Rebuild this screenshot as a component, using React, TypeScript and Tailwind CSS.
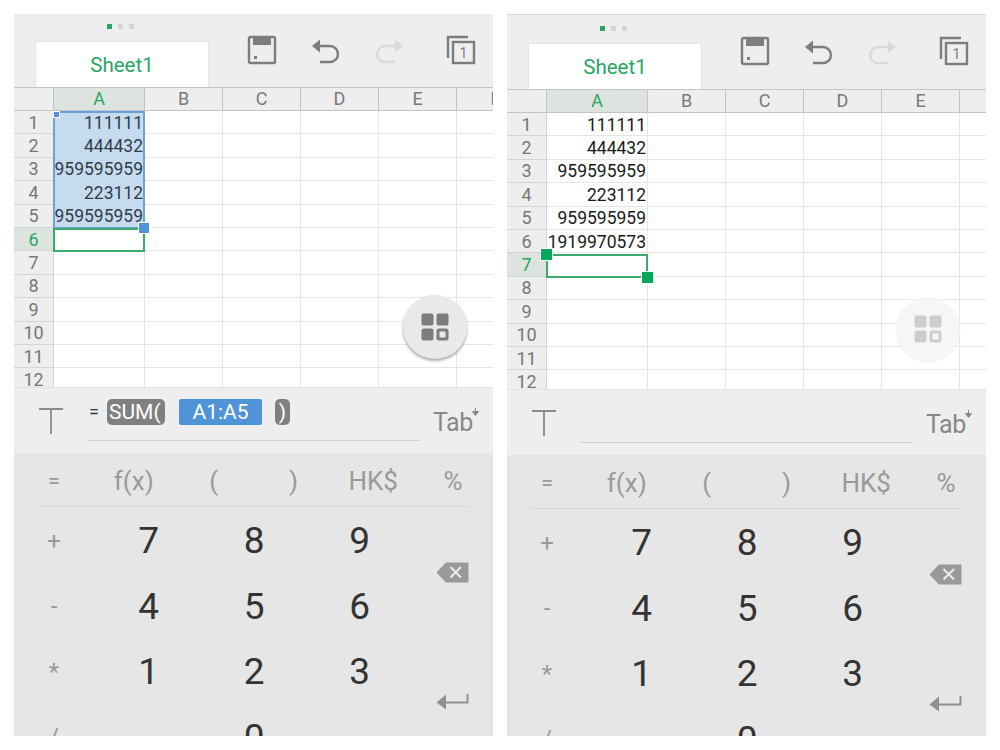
import React from "react";

const rows = ["1", "2", "3", "4", "5", "6", "7", "8", "9", "10", "11", "12"];
const colsOther = ["B", "C", "D", "E", "F"];

function Save() {
  return (
    <svg width="30" height="30" viewBox="0 0 30 30" className="block">
      <rect x="2" y="2" width="26" height="26" rx="1.5" fill="none" stroke="#7d7d7d" strokeWidth="2.4" />
      <rect x="6" y="2" width="18" height="8" fill="#7d7d7d" />
      <rect x="7" y="21" width="3" height="3" fill="#7d7d7d" />
    </svg>
  );
}

function Undo({ color, flip }: { color: string; flip?: boolean }) {
  return (
    <svg width="30" height="28" viewBox="0 0 30 28" className="block" style={flip ? { transform: "scaleX(-1)" } : undefined}>
      <path d="M7 8 H19 a8 8 0 0 1 0 16 H9" fill="none" stroke={color} strokeWidth="2.4" />
      <path d="M9 1.5 V14.5 L1 8 Z" fill={color} />
    </svg>
  );
}

function Sheets() {
  return (
    <svg width="30" height="30" viewBox="0 0 30 30" className="block">
      <path d="M2 23 V2 H22" fill="none" stroke="#7d7d7d" strokeWidth="2.4" />
      <rect x="7" y="7" width="21" height="21" fill="none" stroke="#7d7d7d" strokeWidth="2.4" />
      <text x="17.5" y="23" textAnchor="middle" fontSize="14" fill="#7d7d7d" fontFamily="Roboto, sans-serif">1</text>
    </svg>
  );
}

function TIcon() {
  return (
    <svg width="26" height="28" viewBox="0 0 26 28" className="block">
      <path d="M1 2 H25 M13 2 V27" stroke="#8a8a8a" strokeWidth="1.8" fill="none" />
    </svg>
  );
}

function Backspace() {
  return (
    <svg width="33" height="21" viewBox="0 0 33 21" className="block">
      <path d="M10 0.5 H32.5 V20.5 H10 L0.5 10.5 Z" fill="#999999" />
      <path d="M14.5 5 L25 15.5 M25 5 L14.5 15.5" stroke="#ececec" strokeWidth="2" />
    </svg>
  );
}

function Enter() {
  return (
    <svg width="33" height="17" viewBox="0 0 33 17" className="block">
      <path d="M9 9.5 H31.5 V1" fill="none" stroke="#8f8f8f" strokeWidth="2" />
      <path d="M10 1.5 V16.5 L0.5 9.5 Z" fill="#8f8f8f" />
    </svg>
  );
}

function GridIcon({ color, hole }: { color: string; hole: string }) {
  return (
    <svg width="28" height="28" viewBox="0 0 28 28" className="block">
      <rect x="0.5" y="0.5" width="12" height="12" rx="2" fill={color} />
      <rect x="15.5" y="0.5" width="12" height="12" rx="2" fill={color} />
      <rect x="0.5" y="15.5" width="12" height="12" rx="2" fill={color} />
      <rect x="17" y="17" width="9" height="9" rx="1" fill={hole} stroke={color} strokeWidth="3" />
    </svg>
  );
}

function Panel({ second }: { second?: boolean }) {
  const values = second
    ? ["111111", "444432", "959595959", "223112", "959595959", "1919970573"]
    : ["111111", "444432", "959595959", "223112", "959595959", ""];
  const activeRow = second ? 6 : 5;
  const aWidth = second ? "w-[101px]" : "w-[91px]";

  return (
    <div className="relative w-[479px] h-[722px] overflow-hidden bg-[#eeeeee] flex flex-col" style={{ fontFamily: "Roboto, sans-serif" }}>
      {/* toolbar */}
      <div className={`${second ? "h-[75px] border-t border-[#dcdcdc]" : "h-[73px]"} flex shrink-0 bg-[#eeeeee]`}>
        <div className="w-[195px] shrink-0 flex flex-col items-center justify-end pl-[21px]">
          <div className="flex gap-[6px] mb-[12px] mr-[3px]">
            <span className="w-[5px] h-[5px] bg-[#29a664]" />
            <span className="w-[5px] h-[5px] bg-[#d4d4d4]" />
            <span className="w-[5px] h-[5px] bg-[#d4d4d4]" />
          </div>
          <div className="w-[174px] h-[46px] bg-white flex items-center justify-center pt-[1px] text-[20.5px] text-[#29a664] border-t border-x border-[#e6e6e6]">
            Sheet1
          </div>
        </div>
        <div className="flex items-start pl-[38px] pt-[21px]">
          <Save />
          <div className="ml-[34px] mt-[3px]"><Undo color="#7d7d7d" /></div>
          <div className="ml-[33px] mt-[3px]"><Undo color="#dadada" flip /></div>
          <div className="ml-[42px]"><Sheets /></div>
        </div>
      </div>

      {/* column header */}
      <div className="h-[24px] flex shrink-0 bg-[#eeeeee] border-y border-[#c4c4c4] text-[18px] text-[#7a7a7a] leading-[22px]">
        <div className="w-[40px] shrink-0 border-r border-[#c4c4c4]" />
        <div className={`${aWidth} shrink-0 bg-[#dde3de] text-center text-[#29a664] border-r border-[#c4c4c4]`}>A</div>
        {colsOther.map((c) => (
          <div key={c} className="w-[78px] shrink-0 text-center border-r border-[#c4c4c4]">{c}</div>
        ))}
      </div>

      {/* sheet body */}
      <div className="relative h-[276px] shrink-0 bg-white overflow-hidden">
        {rows.map((r, i) => (
          <div key={r} className="h-[23.4px] flex">
            <div
              className={`w-[40px] shrink-0 flex items-center justify-center text-[18px] border-r border-b border-[#d4d4d4] ${
                i === activeRow ? "bg-[#dde3de] text-[#29a664]" : "bg-[#eeeeee] text-[#777777]"
              }`}
            >
              {r}
            </div>
            <div
              className={`${aWidth} shrink-0 flex items-center justify-end pr-[1px] pt-[1px] text-[17.5px] border-r border-b ${
                !second && i < 5 ? "bg-[#c6dcee] border-[#c6dcee] text-[#2f3d4a]" : "border-[#e6e6e6] text-[#1a1a1a]"
              }`}
            >
              {values[i]}
            </div>
            {colsOther.map((c) => (
              <div key={c} className="w-[78px] shrink-0 border-r border-b border-[#e6e6e6]" />
            ))}
          </div>
        ))}

        {/* selection overlays */}
        {!second && (
          <>
            <div className="absolute left-[39px] top-0 w-[92px] h-[117.5px] border-2 border-[#6aa3d8]" />
            <div className="absolute left-[39px] top-0 w-[7px] h-[7px] bg-[#4f94d8] border border-white" />
            <div className="absolute left-[39px] top-[117px] w-[92px] h-[24px] border-2 border-[#3aab6d]" />
            <div className="absolute left-[124px] top-[111px] w-[12px] h-[12px] bg-[#4f94d8] border border-white" />
          </>
        )}
        {second && (
          <>
            <div className="absolute left-[39px] top-[141px] w-[102px] h-[24px] border-2 border-[#3aab6d]" />
            <div className="absolute left-[33px] top-[135px] w-[13px] h-[13px] bg-[#03a85a] border border-white" />
            <div className="absolute left-[134px] top-[158px] w-[13px] h-[13px] bg-[#03a85a] border border-white" />
          </>
        )}

        {/* floating button */}
        <div
          className={`absolute left-[389px] top-[184px] w-[64px] h-[64px] rounded-full flex items-center justify-center ${
            second ? "bg-[#f6f6f6] shadow-[0_1px_2px_rgba(0,0,0,0.06)]" : "bg-[#e9e9e9] shadow-[0_2px_3px_rgba(0,0,0,0.35)]"
          }`}
        >
          {second ? <GridIcon color="#cdcdcd" hole="#f6f6f6" /> : <GridIcon color="#7d7d7d" hole="#e9e9e9" />}
        </div>
      </div>

      {/* formula bar */}
      <div className="h-[66px] shrink-0 bg-[#eeeeee] border-t border-[#e2e2e2] flex">
        <div className="pl-[24px] pt-[19px] w-[74px] shrink-0"><TIcon /></div>
        <div className="w-[331px] h-[53px] shrink-0 border-b border-[#cdcdcd] flex items-start pt-[11px] text-[21px] leading-[26px]">
          {!second && (
            <>
              <span className="ml-[1px] w-[18px] text-[#333333] text-[18px]">=</span>
              <span className="w-[58px] h-[26px] bg-[#808080] rounded-[5px] text-white pl-[2px] overflow-hidden">SUM(</span>
              <span className="ml-[14px] w-[83px] h-[26px] bg-[#4f94d8] rounded-[2px] text-white text-center">A1:A5</span>
              <span className="ml-[13px] w-[15px] h-[26px] bg-[#808080] rounded-[5px] text-white text-center">)</span>
            </>
          )}
        </div>
        <div className="relative ml-[14px] pt-[20px] text-[25px] leading-[30px] text-[#888888] tracking-[-0.5px]">
          Tab
          <svg width="7" height="8" viewBox="0 0 7 8" className="absolute -right-[6px] top-[20px]">
            <path d="M3.5 0 V4 M0.5 3.5 H6.5 L3.5 7.5 Z" stroke="#888888" strokeWidth="1" fill="#888888" />
          </svg>
        </div>
      </div>

      {/* keypad */}
      <div className="flex-1 min-h-0 bg-[#e6e6e6] text-[#8c8c8c]">
        <div className="mx-[24px] h-[54px] border-b border-[#d6d6d6]">
          <div className="-mx-[24px] grid grid-cols-6 text-[26px] h-[53px] pt-[9px] leading-[38px] text-center text-[#9a9a9a]">
            <span className="text-[22px]">=</span>
            <span>f(x)</span>
            <span>(</span>
            <span>)</span>
            <span>HK$</span>
            <span>%</span>
          </div>
        </div>
        <div className="grid grid-cols-[82px_105.5px_105.5px_105.5px_1fr] grid-rows-[65.5px_65.5px_65.5px_65.5px] text-center items-center text-[37px] text-[#333333] pt-[1px]">
          <span className="text-[24px] text-[#999999] pr-[2px]">+</span>
          <span>7</span>
          <span>8</span>
          <span>9</span>
          <div className="row-span-2 flex justify-center -mt-[2px]"><Backspace /></div>
          <span className="text-[24px] text-[#999999] pr-[2px]">-</span>
          <span>4</span>
          <span>5</span>
          <span>6</span>
          <span className="text-[24px] text-[#999999] pr-[2px]">*</span>
          <span>1</span>
          <span>2</span>
          <span>3</span>
          <div className="row-span-2 flex justify-center -mt-[6px]"><Enter /></div>
          <span className="text-[24px] text-[#999999] pr-[2px]">/</span>
          <span />
          <span>0</span>
          <span />
        </div>
      </div>
    </div>
  );
}

export default function App() {
  return (
    <div className="w-[1000px] h-[750px] bg-white flex gap-[14px] pl-[14px] pt-[14px]">
      <Panel />
      <Panel second />
    </div>
  );
}
